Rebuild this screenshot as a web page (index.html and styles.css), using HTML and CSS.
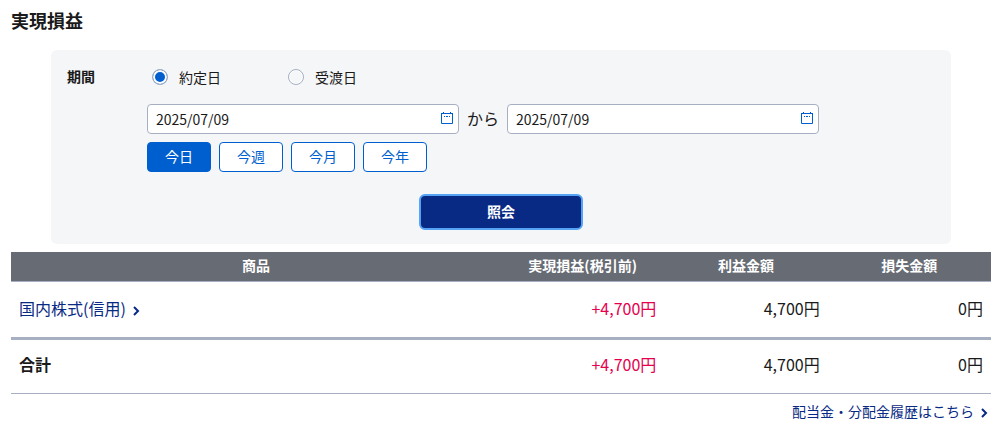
FILE: index.html
```html
<!DOCTYPE html>
<html lang="ja">
<head>
    <meta charset="UTF-8">
    <meta name="viewport" content="width=device-width, initial-scale=1.0">
    <title>実現損益</title>
    <link rel="stylesheet" href="styles.css">
</head>
<body>

    <main class="container">
        <h1>実現損益</h1>

        <form class="search">
            <div class="search-row">
                <span class="search-label" id="period">期間</span>
                <div class="search-fields" role="group" aria-labelledby="period">
                    <div class="radios">
                        <label class="radio"><input type="radio" name="dateType" checked>約定日</label>
                        <label class="radio"><input type="radio" name="dateType">受渡日</label>
                    </div>
                    <div class="dates">
                        <div class="date">
                            <input type="text" value="2025/07/09" aria-label="開始日">
                            <svg class="calendar" viewBox="0 0 14 14" aria-hidden="true">
                                <path d="M1.5 2.5h11v10h-11zM3.5 1v2M10.5 1v2" fill="none" stroke="currentColor"/>
                                <path d="M1 2h12v1H1zM4 5h1v1H4zM6 5h2v1H6zM9 5h1v1H9z" fill="currentColor"/>
                            </svg>
                        </div>
                        <span class="from">から</span>
                        <div class="date">
                            <input type="text" value="2025/07/09" aria-label="終了日">
                            <svg class="calendar" viewBox="0 0 14 14" aria-hidden="true">
                                <path d="M1.5 2.5h11v10h-11zM3.5 1v2M10.5 1v2" fill="none" stroke="currentColor"/>
                                <path d="M1 2h12v1H1zM4 5h1v1H4zM6 5h2v1H6zM9 5h1v1H9z" fill="currentColor"/>
                            </svg>
                        </div>
                    </div>
                    <div class="ranges">
                        <button type="button" class="range active">今日</button>
                        <button type="button" class="range">今週</button>
                        <button type="button" class="range">今月</button>
                        <button type="button" class="range">今年</button>
                    </div>
                </div>
            </div>
            <button type="submit" class="submit">照会</button>
        </form>

        <table class="result">
            <thead>
                <tr>
                    <th class="product">商品</th>
                    <th>実現損益(税引前)</th>
                    <th>利益金額</th>
                    <th>損失金額</th>
                </tr>
            </thead>
            <tbody>
                <tr>
                    <td class="name">
                        <a href="#">国内株式(信用)<svg class="arrow" viewBox="0 0 8 10" aria-hidden="true"><path d="M2 1l4 4-4 4"/></svg></a>
                    </td>
                    <td class="plus">+4,700円</td>
                    <td>4,700円</td>
                    <td>0円</td>
                </tr>
            </tbody>
            <tfoot>
                <tr>
                    <th class="name" scope="row">合計</th>
                    <td class="plus">+4,700円</td>
                    <td>4,700円</td>
                    <td>0円</td>
                </tr>
            </tfoot>
        </table>

        <p class="history">
            <a href="#">配当金・分配金履歴はこちら<svg class="arrow" viewBox="0 0 8 10" aria-hidden="true"><path d="M2 1l4 4-4 4"/></svg></a>
        </p>
    </main>

</body>
</html>
```
FILE: styles.css
```css
* {
    box-sizing: border-box;
}
body {
    margin: 0;
    font-family: "Noto Sans CJK JP", sans-serif;
    font-size: 14px;
    line-height: 20px;
    color: #1a1a1a;
    background-color: #fff;
}
input, button {
    font-family: inherit;
    font-size: 14px;
    color: inherit;
}
a {
    color: #082984;
    text-decoration: none;
}
a:hover {
    text-decoration: underline;
}
.container {
    padding: 8px 16px 0 11px;
}
h1 {
    margin: 0 0 18px;
    font-size: 18px;
    line-height: 24px;
}
.search {
    max-width: 900px;
    margin: 0 auto 8px;
    padding: 16px 16px 14px;
    background-color: #f4f6f8;
    border-radius: 6px;
}
.search-row {
    display: flex;
}
.search-label {
    width: 80px;
    font-weight: bold;
}
.search-fields {
    flex: 1;
}
.radios {
    display: flex;
    gap: 67px;
    padding-left: 5px;
}
.radio {
    display: flex;
    align-items: center;
    gap: 11px;
    line-height: 22px;
}
.radio input {
    appearance: none;
    width: 16px;
    height: 16px;
    margin: 0;
    border: 1px solid #a7afc3;
    border-radius: 50%;
    background-color: #f4f6f8;
    box-shadow: inset 0 0 0 1px #fff;
}
.radio input:checked {
    background-color: #005fcf;
    box-shadow: inset 0 0 0 2px #fff;
}
.dates {
    display: flex;
    align-items: center;
    margin-top: 16px;
}
.date {
    position: relative;
    flex: 0 1 312px;
}
.date input {
    display: block;
    width: 100%;
    height: 30px;
    padding: 0 32px 0 8px;
    border: 1px solid #a7afc3;
    border-radius: 4px;
    background-color: #fff;
}
.calendar {
    position: absolute;
    top: 7px;
    right: 5px;
    width: 14px;
    height: 14px;
    color: #005fcf;
}
.from {
    padding: 0 8px 2px;
    font-size: 16px;
}
.ranges {
    display: flex;
    gap: 8px;
    margin-top: 8px;
}
.range {
    width: 64px;
    height: 30px;
    padding: 0 0 2px;
    border: 1px solid #005fcf;
    border-radius: 4px;
    background-color: #fff;
    color: #005fcf;
    cursor: pointer;
}
.range.active {
    background-color: #005fcf;
    color: #fff;
}
.submit {
    display: block;
    width: 164px;
    height: 36px;
    margin: 22px auto 0;
    padding: 0 0 2px;
    border: 2px solid #56a3f5;
    border-radius: 6px;
    background-color: #082984;
    color: #fff;
    font-weight: bold;
    cursor: pointer;
}
.result {
    width: 100%;
    table-layout: fixed;
    border-collapse: separate;
    border-spacing: 0;
}
.result thead th {
    padding: 3px 0 6px;
    background-color: #676b73;
    border-bottom: 1px solid #a7afc3;
    color: #fff;
}
.result .product {
    width: 50%;
}
.result td, .result tfoot th {
    padding: 14px 8px 17px;
    font-size: 16px;
    line-height: 24px;
    text-align: right;
}
.result tbody td {
    border-bottom: 3px solid #a7afc3;
}
.result tfoot th, .result tfoot td {
    padding: 12px 8px 17px;
    border-bottom: 1px solid #a7afc3;
}
.result .name {
    text-align: left;
}
.result .plus {
    color: #e5004f;
}
.arrow {
    width: 8px;
    height: 10px;
    margin-left: 6px;
    vertical-align: -1px;
    fill: none;
    stroke: currentColor;
    stroke-width: 2;
}
.history {
    margin: 7px 3px 0 0;
    text-align: right;
}
```
